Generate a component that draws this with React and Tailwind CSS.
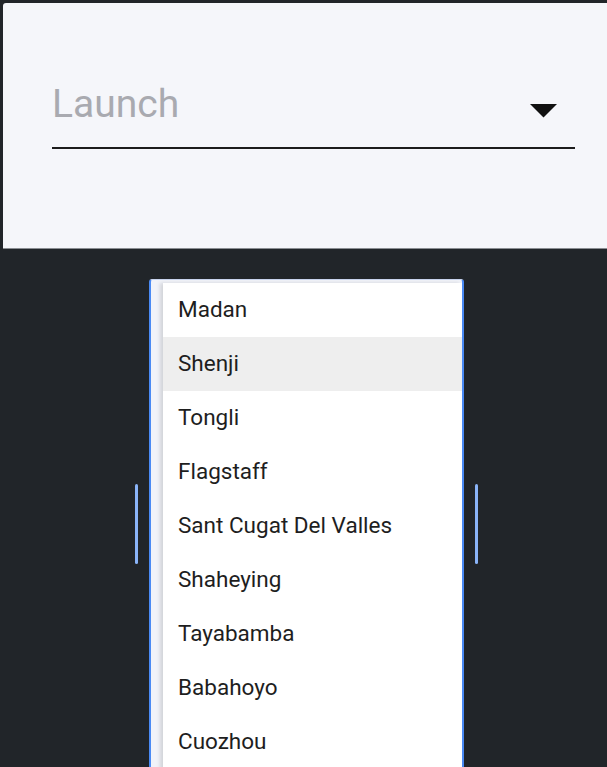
const cities = [
  "Madan",
  "Shenji",
  "Tongli",
  "Flagstaff",
  "Sant Cugat Del Valles",
  "Shaheying",
  "Tayabamba",
  "Babahoyo",
  "Cuozhou",
  "Yangcun",
];

export default function App() {
  return (
    <div
      className="h-screen overflow-hidden bg-[#212529] pt-[3px] pl-[3px]"
      style={{ fontFamily: "Roboto, 'Noto Sans', sans-serif" }}
    >
      {/* select field card */}
      <div className="h-[246px] rounded-tl-[3px] bg-[#f5f6fa] border-b border-[#8a8d92] pl-[49px] pr-[32px] pt-[81px]">
        <div className="flex items-end justify-between border-b-2 border-[#1c1c1c] pb-[23px]">
          <span className="text-[39px] leading-[40px] text-[#a9aab0]">Launch</span>
          <svg width="27" height="14" viewBox="0 0 27 14" className="mb-[6px] mr-[18px]">
            <polygon points="0,0 27,0 13.5,13.5" fill="#111" />
          </svg>
        </div>
      </div>

      {/* open menu */}
      <div className="flex items-start pl-[132px] pt-[30px]">
        <div className="mt-[205px] h-[80px] w-[3px] rounded-sm bg-[#8ab4f8]" />
        <div className="ml-[11px] w-[315px] rounded-t-[3px] border-x-2 border-t border-[#4a8af4] border-t-[#c9d4ee] bg-[#f1f3f9] pl-[12px] pt-[3px]">
          <ul className="bg-white shadow-[-3px_0_4px_rgba(0,0,0,0.13)]">
            {cities.map((c) => (
              <li
                key={c}
                className={`flex h-[54px] items-center pl-[15px] text-[22.5px] text-[#1e1e1e] ${
                  c === "Shenji" ? "bg-[#eeeeee]" : ""
                }`}
              >
                {c}
              </li>
            ))}
          </ul>
        </div>
        <div className="ml-[11px] mt-[205px] h-[80px] w-[3px] rounded-sm bg-[#8ab4f8]" />
      </div>
    </div>
  );
}
